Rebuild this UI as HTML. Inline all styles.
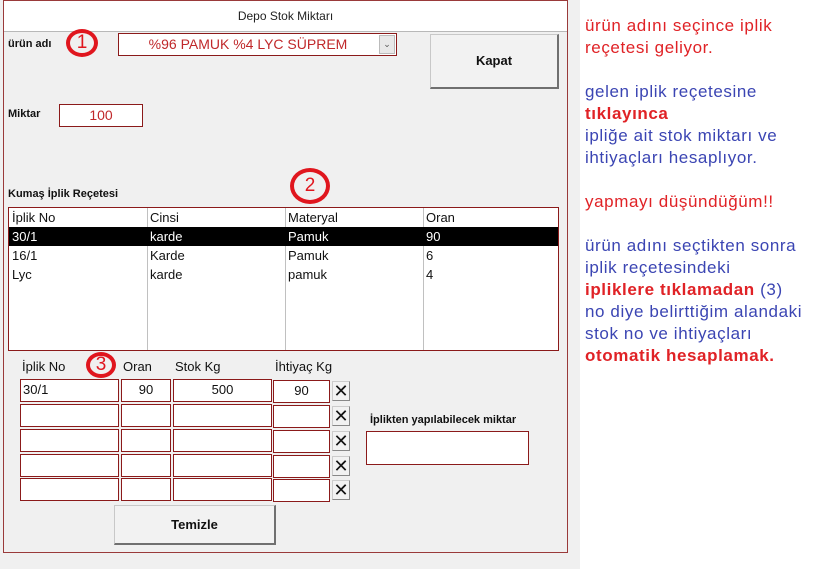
<!DOCTYPE html>
<html><head><meta charset="utf-8"><style>
*{margin:0;padding:0;box-sizing:border-box}
body{width:823px;height:569px;background:#fff;position:relative;overflow:hidden;font-family:"Liberation Sans",sans-serif}
.a{position:absolute}
.win{left:0;top:0;width:580px;height:569px;background:#f0f0f0}
.frame{left:3px;top:0;width:565px;height:553px;border:1px solid #9a3a3a;background:#f0f0f0}
.title{left:4px;top:1px;width:563px;height:31px;background:#fff;border-bottom:1px solid #b8b8b8;font-size:12px;color:#222;text-align:center;line-height:31px}
.lbl{font-size:11px;font-weight:bold;color:#111}
.box{background:#fff;border:1px solid #8b1a1a}
.red{color:#c0282a}
.btn{background:#f2f2f2;border:1px solid #c8c8c8;border-right:2px solid #707070;border-bottom:2px solid #707070;font-size:13px;font-weight:bold;text-align:center;color:#111}
.circ{border:4px solid #e0161e;border-radius:50%;color:#e0161e;text-align:center;font-size:19px}
.lt{font-size:13px;color:#111}
.row{font-size:13px;color:#111;height:19px;line-height:19px}
.x{background:#f2f2f2;border:1px solid #ccc;border-right:1px solid #888;border-bottom:1px solid #888;width:18px;height:20px;font-size:18px;line-height:18px;text-align:center;color:#111}
.rt{left:585px;font-size:17px;line-height:22px;letter-spacing:0.6px}
.r{color:#e02226}.b{color:#3b45b3}
</style></head><body>
<div class="a win"></div>
<div class="a frame"></div>
<div class="a title">Depo Stok Miktarı</div>
<div class="a lbl" style="left:8px;top:38px">ürün adı</div>
<div class="a circ" style="left:66px;top:29px;width:32px;height:28px;line-height:20px">1</div>
<div class="a box" style="left:118px;top:33px;width:279px;height:23px"></div>
<div class="a red" style="left:118px;top:33px;width:260px;height:23px;font-size:14px;text-align:center;line-height:22px">%96 PAMUK %4 LYC SÜPREM</div>
<div class="a" style="left:379px;top:35px;width:16px;height:19px;background:#e8e8e8;border:1px solid #bbb;font-size:9px;text-align:center;line-height:17px;color:#555">&#8964;</div>
<div class="a btn" style="left:430px;top:34px;width:129px;height:55px;line-height:52px">Kapat</div>
<div class="a lbl" style="left:8px;top:108px">Miktar</div>
<div class="a box red" style="left:59px;top:104px;width:84px;height:23px;font-size:14px;text-align:center;line-height:21px">100</div>
<div class="a lbl" style="left:8px;top:188px">Kumaş İplik Reçetesi</div>
<div class="a circ" style="left:290px;top:168px;width:40px;height:36px;line-height:28px">2</div>
<div class="a box" style="left:8px;top:207px;width:551px;height:144px"></div>
<div class="a" style="left:147px;top:208px;width:1px;height:142px;background:#c0c0c0"></div>
<div class="a" style="left:285px;top:208px;width:1px;height:142px;background:#c0c0c0"></div>
<div class="a" style="left:423px;top:208px;width:1px;height:142px;background:#c0c0c0"></div>
<div class="a" style="left:9px;top:227px;width:549px;height:19px;background:#000"></div>
<div class="a row" style="left:12px;top:208px">İplik No</div><div class="a row" style="left:150px;top:208px">Cinsi</div><div class="a row" style="left:288px;top:208px">Materyal</div><div class="a row" style="left:426px;top:208px">Oran</div>
<div class="a row" style="left:12px;top:227px;color:#fff">30/1</div><div class="a row" style="left:150px;top:227px;color:#fff">karde</div><div class="a row" style="left:288px;top:227px;color:#fff">Pamuk</div><div class="a row" style="left:426px;top:227px;color:#fff">90</div>
<div class="a row" style="left:12px;top:246px">16/1</div><div class="a row" style="left:150px;top:246px">Karde</div><div class="a row" style="left:288px;top:246px">Pamuk</div><div class="a row" style="left:426px;top:246px">6</div>
<div class="a row" style="left:12px;top:265px">Lyc</div><div class="a row" style="left:150px;top:265px">karde</div><div class="a row" style="left:288px;top:265px">pamuk</div><div class="a row" style="left:426px;top:265px">4</div>
<div class="a lt" style="left:22px;top:359px">İplik No</div>
<div class="a circ" style="left:86px;top:352px;width:30px;height:26px;line-height:18px">3</div>
<div class="a lt" style="left:123px;top:359px">Oran</div>
<div class="a lt" style="left:175px;top:359px">Stok Kg</div>
<div class="a lt" style="left:275px;top:359px">İhtiyaç Kg</div>
<div class="a box lt" style="left:20px;top:379px;width:99px;height:23px;line-height:20px;padding-left:2px">30/1</div>
<div class="a box lt" style="left:121px;top:379px;width:50px;height:23px;line-height:20px;text-align:center">90</div>
<div class="a box lt" style="left:173px;top:379px;width:99px;height:23px;line-height:20px;text-align:center">500</div>
<div class="a box lt" style="left:273px;top:380px;width:57px;height:23px;line-height:20px;text-align:center">90</div>
<div class="a x" style="left:332px;top:381px">✕</div>
<div class="a box" style="left:20px;top:404px;width:99px;height:23px"></div><div class="a box" style="left:121px;top:404px;width:50px;height:23px"></div><div class="a box" style="left:173px;top:404px;width:99px;height:23px"></div><div class="a box" style="left:273px;top:405px;width:57px;height:23px"></div><div class="a x" style="left:332px;top:406px">✕</div>
<div class="a box" style="left:20px;top:429px;width:99px;height:23px"></div><div class="a box" style="left:121px;top:429px;width:50px;height:23px"></div><div class="a box" style="left:173px;top:429px;width:99px;height:23px"></div><div class="a box" style="left:273px;top:430px;width:57px;height:23px"></div><div class="a x" style="left:332px;top:431px">✕</div>
<div class="a box" style="left:20px;top:454px;width:99px;height:23px"></div><div class="a box" style="left:121px;top:454px;width:50px;height:23px"></div><div class="a box" style="left:173px;top:454px;width:99px;height:23px"></div><div class="a box" style="left:273px;top:455px;width:57px;height:23px"></div><div class="a x" style="left:332px;top:456px">✕</div>
<div class="a box" style="left:20px;top:478px;width:99px;height:23px"></div><div class="a box" style="left:121px;top:478px;width:50px;height:23px"></div><div class="a box" style="left:173px;top:478px;width:99px;height:23px"></div><div class="a box" style="left:273px;top:479px;width:57px;height:23px"></div><div class="a x" style="left:332px;top:480px">✕</div>
<div class="a lbl" style="left:370px;top:414px">İplikten yapılabilecek miktar</div>
<div class="a box" style="left:366px;top:431px;width:163px;height:34px"></div>
<div class="a btn" style="left:114px;top:505px;width:162px;height:40px;line-height:37px">Temizle</div>
<div class="a rt" style="top:15px"><span class="r">ürün adını seçince iplik<br>reçetesi geliyor.</span><br><br>
<span class="b">gelen iplik reçetesine</span><br><b class="r">tıklayınca</b><br><span class="b">ipliğe ait stok miktarı ve<br>ihtiyaçları hesaplıyor.</span><br><br>
<span class="r">yapmayı düşündüğüm!!</span><br><br>
<span class="b">ürün adını seçtikten sonra<br>iplik reçetesindeki</span><br><b class="r">ipliklere tıklamadan</b> <span class="b">(3)<br>no diye belirttiğim alandaki<br>stok no ve ihtiyaçları</span><br><b class="r">otomatik hesaplamak.</b></div>
</body></html>
